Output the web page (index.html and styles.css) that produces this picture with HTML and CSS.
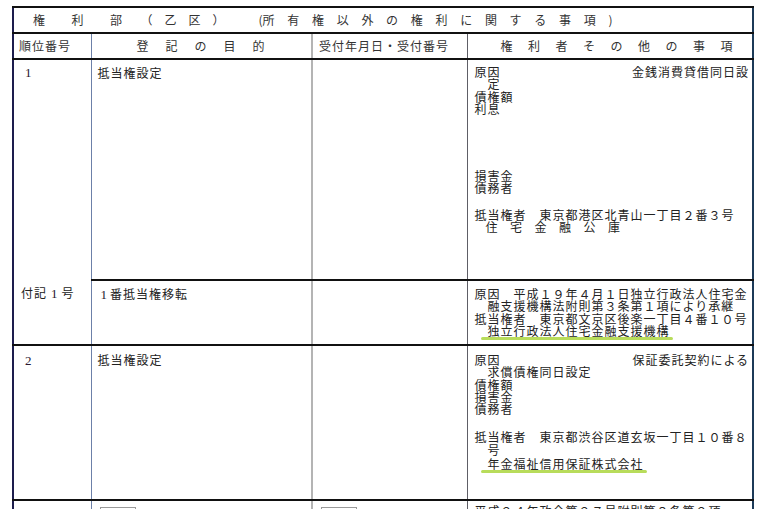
FILE: index.html
```html
<!DOCTYPE html>
<html lang="ja">
<head>
<meta charset="utf-8">
<title>権利部（乙区）</title>
<link rel="stylesheet" href="styles.css">
</head>
<body>
<table class="reg">
  <colgroup><col class="c1"><col class="c2"><col class="c3"><col class="c4"></colgroup>
  <tr class="r-title">
    <td colspan="4" class="title"><span class="t1">権利部</span><span class="t2">（乙区）</span><span class="t3"><span class="lp">(</span>所有権以外の権利に関する事項)</span></td>
  </tr>
  <tr class="r-head">
    <th class="k1 h1">順位番号</th>
    <th class="k2 h2">登記の目的</th>
    <th class="k3 h3">受付年月日・受付番号</th>
    <th class="k4 h4">権利者その他の事項</th>
  </tr>
  <tr class="r1">
    <td class="k1 open-b"><span class="num lead">1</span></td>
    <td class="k2">抵当権設定</td>
    <td class="k3"></td>
    <td class="k4">
      <div class="ln split"><span>原因</span><span>金銭消費貸借同日設</span></div>
      <div class="ln ind">定</div>
      <div class="ln">債権額</div>
      <div class="ln">利息</div>
      <div class="ln gap-a">損害金</div>
      <div class="ln">債務者</div>
      <div class="ln gap-b">抵当権者　東京都港区北青山一丁目２番３号</div>
      <div class="ln ind spaced">住宅金融公庫</div>
    </td>
  </tr>
  <tr class="r2">
    <td class="k1 open-t">付記<span class="num">1</span>号</td>
    <td class="k2"><span class="num first">1</span>番抵当権移転</td>
    <td class="k3"></td>
    <td class="k4">
      <div class="ln">原因　平成１９年４月１日独立行政法人住宅金</div>
      <div class="ln ind">融支援機構法附則第３条第１項により承継</div>
      <div class="ln">抵当権者　東京都文京区後楽一丁目４番１０号</div>
      <div class="ln ind"><span class="mark">独立行政法人住宅金融支援機構</span></div>
    </td>
  </tr>
  <tr class="r3">
    <td class="k1"><span class="num lead">2</span></td>
    <td class="k2">抵当権設定</td>
    <td class="k3"></td>
    <td class="k4">
      <div class="ln split"><span>原因</span><span>保証委託契約による</span></div>
      <div class="ln ind">求償債権同日設定</div>
      <div class="ln">債権額</div>
      <div class="ln">損害金</div>
      <div class="ln">債務者</div>
      <div class="ln gap-c">抵当権者　東京都渋谷区道玄坂一丁目１０番８</div>
      <div class="ln ind">号</div>
      <div class="ln ind gap-d"><span class="mark">年金福祉信用保証株式会社</span></div>
    </td>
  </tr>
  <tr class="r4">
    <td class="k1"></td>
    <td class="k2"><div class="stamp"></div></td>
    <td class="k3"><div class="stamp"></div></td>
    <td class="k4"><div class="ln">平成２４年政令第２７号附則第３条第２項</div></td>
  </tr>
</table>
</body>
</html>
```
FILE: styles.css
```css
html, body {
  margin: 0;
  padding: 0;
  background: #fff;
}
body {
  width: 757px;
  height: 509px;
  overflow: hidden;
  font-family: "Noto Sans CJK JP", "Noto Sans", sans-serif;
  font-size: 12px;
  letter-spacing: 1px;
  color: #222;
}
.reg {
  margin: 6px 0 0 12px;
  border-collapse: collapse;
  table-layout: fixed;
  width: 740px;
  border-top: 2px solid #111;
  border-left: 2px solid #1d1d4d;
  border-right: 2px solid #1c3a58;
}
.c1 { width: 78px; }
.c2 { width: 221px; }
.c3 { width: 155px; }
.c4 { width: 286px; }

.reg td, .reg th {
  padding: 0;
  vertical-align: top;
  text-align: left;
  font-weight: normal;
  border-top: 2px solid #111;
  border-bottom: 2px solid #111;
  line-height: 12.3px;
}
.reg .k1 { border-right: 1px solid #6c80a8; }
.reg .k2 { border-right: 2px solid #b4b4b4; }
.reg .k3 { border-right: 1px solid #5e5e66; }

.reg .open-b { border-bottom: none; }
.reg .open-t { border-top: none; }

/* title row */
.r-title { height: 26px; }
.reg .title {
  vertical-align: middle;
  padding: 1px 0 0 19px;
  color: #333;
  white-space: nowrap;
}
.t1 { letter-spacing: 26.5px; }
.t2 { letter-spacing: 12px; margin-left: -8px; }
.t3 { letter-spacing: 12.7px; margin-left: 22px; }
.t3 .lp { letter-spacing: 0; }

/* header row */
.r-head { height: 26px; }
.reg .r-head th {
  vertical-align: middle;
  white-space: nowrap;
  color: #333;
}
.reg .r-head .h1 { padding-left: 5px; }
.reg .r-head .h2 { padding-left: 45px; letter-spacing: 17px; }
.reg .r-head .h3 { padding-left: 6px; }
.reg .r-head .h4 { padding-left: 33px; letter-spacing: 15.5px; }

/* body rows */
.r1 { height: 221px; }
.r2 { height: 65px; }
.r3 { height: 155px; }
.r4 { height: 40px; }

.reg td.k1 { padding-left: 7px; }
.reg td.k2 { padding-left: 6px; }
.reg td.k4 { padding-left: 7px; padding-right: 3px; }

.reg .r1 td { padding-top: 6px; }
.reg .r1 td.k2 { padding-top: 7px; }
.reg .r2 td { padding-top: 7px; }
.reg .r3 td { padding-top: 8px; }
.reg .r4 td { padding-top: 4px; }

.num {
  font-family: "Liberation Serif", serif;
  font-size: 13px;
  letter-spacing: 0;
  margin: 0 4px;
  color: #2a1830;
}
.num.lead { margin-left: 4px; }
.num.first { margin-left: 3px; margin-right: 3px; }

.ln { white-space: nowrap; }
.split { display: flex; justify-content: space-between; }
.ind { padding-left: 13px; }
.spaced { letter-spacing: 12.5px; padding-left: 11px; }
.gap-a { margin-top: 55px; }
.gap-b { margin-top: 14px; }
.gap-c { margin-top: 16px; }
.gap-d { margin-top: 2px; }

.mark { position: relative; }
.mark::after {
  content: "";
  position: absolute;
  left: -7px;
  right: -3px;
  bottom: -1px;
  height: 3px;
  border-radius: 2px;
  background: rgba(172, 214, 62, 0.85);
  filter: blur(0.4px);
}

.stamp {
  width: 34px;
  height: 10px;
  margin-left: 2px;
  margin-top: 2px;
  border: 1px solid #9a9a9a;
  border-bottom: none;
  background: linear-gradient(#fff, #f0f0f0);
}
.r4 .k3 .stamp { margin-left: 8px; }
```
